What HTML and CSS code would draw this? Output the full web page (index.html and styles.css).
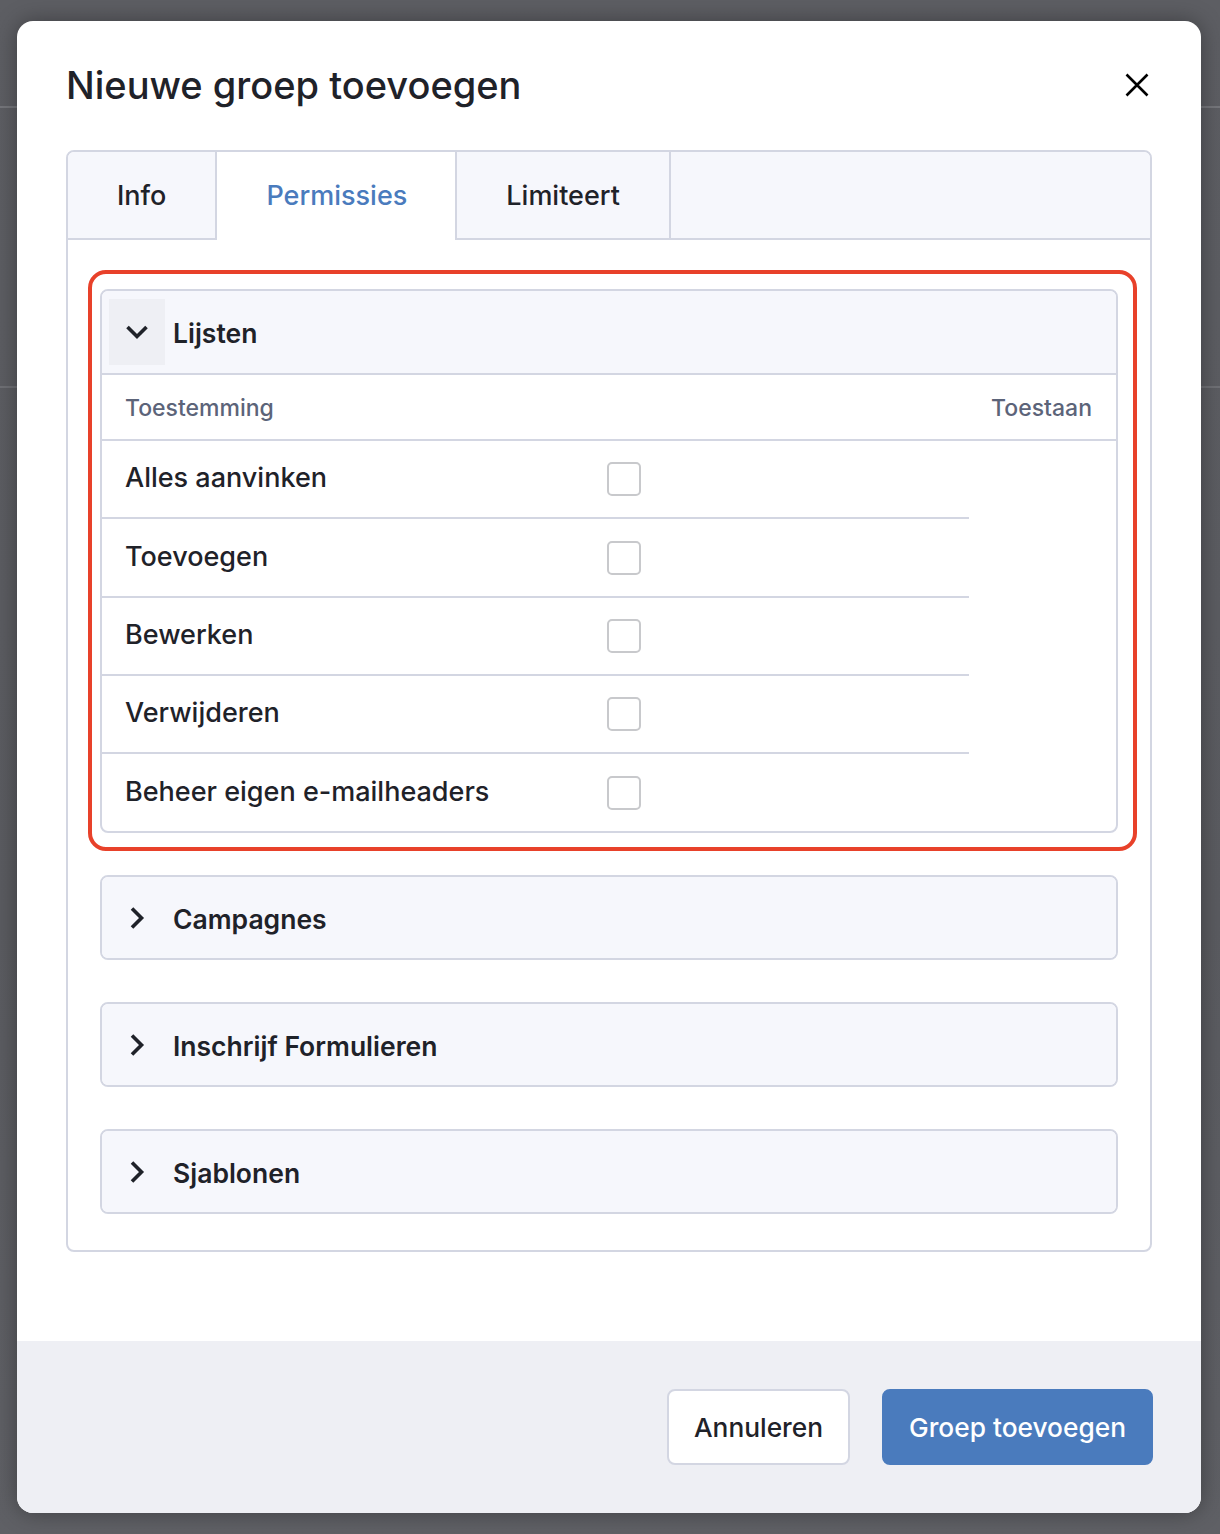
FILE: index.html
```html
<!DOCTYPE html>
<html lang="nl">
<head>
<meta charset="utf-8">
<title>Nieuwe groep toevoegen</title>
<link rel="stylesheet" href="styles.css">
</head>
<body>
<div class="modal">
  <div class="modal-header">
    <h1 class="modal-title">Nieuwe groep toevoegen</h1>
    <button class="close-btn" aria-label="Sluiten">
      <svg width="30" height="30" viewBox="0 0 30 30"><path d="M4.5 4.5 L25.5 25.5 M25.5 4.5 L4.5 25.5" stroke="#000" stroke-width="2.6" fill="none"/></svg>
    </button>
  </div>
  <div class="modal-body">
    <div class="tab-card">
      <div class="tab-bar">
        <div class="tab">Info</div>
        <div class="tab active">Permissies</div>
        <div class="tab">Limiteert</div>
      </div>
      <div class="tab-content">
        <div class="accordion open">
          <div class="highlight"></div>
          <div class="acc-header">
            <span class="acc-toggle">
              <svg width="24" height="24" viewBox="0 0 24 24"><path d="M2.5 7 L12 16.5 L21.5 7" stroke="#1f2229" stroke-width="3.6" fill="none"/></svg>
            </span>
            <span class="acc-title">Lijsten</span>
          </div>
          <div class="perm-table">
            <div class="perm-head">
              <span class="th-name">Toestemming</span>
              <span class="th-allow">Toestaan</span>
            </div>
            <div class="perm-row"><span class="cell-name">Alles aanvinken</span><span class="cell-check"><span class="checkbox"></span></span></div>
            <div class="perm-row tall"><span class="cell-name">Toevoegen</span><span class="cell-check"><span class="checkbox"></span></span></div>
            <div class="perm-row"><span class="cell-name">Bewerken</span><span class="cell-check"><span class="checkbox"></span></span></div>
            <div class="perm-row"><span class="cell-name">Verwijderen</span><span class="cell-check"><span class="checkbox"></span></span></div>
            <div class="perm-row last"><span class="cell-name">Beheer eigen e-mailheaders</span><span class="cell-check"><span class="checkbox"></span></span></div>
          </div>
        </div>
        <div class="accordion">
          <div class="acc-header">
            <span class="acc-toggle plain">
              <svg class="right" width="24" height="24" viewBox="0 0 24 24"><path d="M2.5 7 L12 16.5 L21.5 7" stroke="#1f2229" stroke-width="3.6" fill="none"/></svg>
            </span>
            <span class="acc-title">Campagnes</span>
          </div>
        </div>
        <div class="accordion">
          <div class="acc-header">
            <span class="acc-toggle plain">
              <svg class="right" width="24" height="24" viewBox="0 0 24 24"><path d="M2.5 7 L12 16.5 L21.5 7" stroke="#1f2229" stroke-width="3.6" fill="none"/></svg>
            </span>
            <span class="acc-title">Inschrijf Formulieren</span>
          </div>
        </div>
        <div class="accordion">
          <div class="acc-header">
            <span class="acc-toggle plain">
              <svg class="right" width="24" height="24" viewBox="0 0 24 24"><path d="M2.5 7 L12 16.5 L21.5 7" stroke="#1f2229" stroke-width="3.6" fill="none"/></svg>
            </span>
            <span class="acc-title">Sjablonen</span>
          </div>
        </div>
      </div>
    </div>
  </div>
  <div class="modal-footer">
    <button class="btn btn-secondary">Annuleren</button>
    <button class="btn btn-primary">Groep toevoegen</button>
  </div>
</div>
</body>
</html>
```
FILE: styles.css
```css
* { box-sizing: border-box; }

html, body {
  margin: 0;
  padding: 0;
}

body {
  width: 1220px;
  height: 1534px;
  overflow: hidden;
  font-family: "Inter", "Liberation Sans", sans-serif;
  color: #1f2229;
  background-color: #64656a;
  background-image:
    linear-gradient(to bottom, transparent 106px, #75767b 106px, #75767b 108px, transparent 108px),
    linear-gradient(to bottom, transparent 386px, #6f7075 386px, #6f7075 388px, transparent 388px),
    linear-gradient(to bottom, #5d5e63 0, #5a5b60 60%, #5f6065 100%);
  padding-top: 21px;
  padding-left: 17px;
}

.modal {
  width: 1184px;
  height: 1492px;
  background: #fff;
  border-radius: 16px;
  overflow: hidden;
  display: flex;
  flex-direction: column;
  box-shadow: 0 0 22px rgba(0, 0, 0, 0.35);
}

.modal-header {
  display: flex;
  align-items: center;
  justify-content: space-between;
  padding: 40px 49px 0 49px;
}

.modal-title {
  margin: 0;
  font-size: 38px;
  line-height: 48px;
  font-weight: 500;
  color: #1f2229;
}

.close-btn {
  border: 0;
  background: none;
  padding: 0;
  width: 30px;
  height: 30px;
  display: block;
}
.close-btn svg { display: block; }

.modal-body {
  flex: 1;
  padding: 41px 49px 0 49px;
}

.tab-card {
  border: 2px solid #d3d6e2;
  border-radius: 8px;
  overflow: hidden;
}

.tab-bar {
  display: flex;
  height: 88px;
  background: #f6f7fc;
  border-bottom: 2px solid #d3d6e2;
}

.tab {
  display: flex;
  align-items: center;
  padding: 0 49px 2px 49px;
  border-right: 2px solid #d3d6e2;
  font-size: 27px;
  font-weight: 500;
  color: #1f2229;
  height: 88px;
}

.tab.active {
  background: #fff;
  color: #4a7bbd;
  padding: 0 48px 2px 49px;
}

.tab-content {
  padding: 49px 32px 36px 32px;
  display: flex;
  flex-direction: column;
  gap: 42px;
}

.accordion {
  position: relative;
  border: 2px solid #d3d6e2;
  border-radius: 8px;
  background: #fff;
}

.highlight {
  position: absolute;
  left: -14px;
  top: -21px;
  right: -21px;
  bottom: -20px;
  border: 4px solid #e8412a;
  border-radius: 18px;
  pointer-events: none;
}

.acc-header {
  display: flex;
  align-items: center;
  gap: 8px;
  padding: 8px 7px;
  background: #f6f7fc;
  border-radius: 6px;
}

.accordion.open .acc-header {
  border-bottom: 2px solid #d3d6e2;
  border-radius: 6px 6px 0 0;
}

.acc-toggle {
  width: 56px;
  height: 65px;
  display: flex;
  align-items: center;
  justify-content: center;
  background: #eeeff4;
}

.accordion.open .acc-toggle { height: 66px; }

.acc-toggle.plain { background: transparent; }

.acc-toggle svg { display: block; }
.acc-toggle svg.right { transform: rotate(-90deg); }

.acc-title {
  font-size: 26.5px;
  font-weight: 600;
  color: #1f2229;
  padding-top: 2px;
}

.perm-head {
  display: flex;
  justify-content: space-between;
  align-items: center;
  height: 66px;
  padding: 2px 24px 0 23px;
  border-bottom: 2px solid #d3d6e2;
  font-size: 23px;
  font-weight: 500;
  color: #5c6479;
}

.perm-row {
  display: flex;
  align-items: center;
  width: 867px;
  height: 78px;
  border-bottom: 2px solid #d3d6e2;
}

.perm-row.tall { height: 79px; }

.perm-row.last { border-bottom: 0; height: 77px; }

.cell-name {
  width: 481px;
  padding-left: 23px;
  padding-bottom: 3px;
  font-size: 27px;
  font-weight: 500;
  color: #1f2229;
}

.cell-check {
  padding-left: 24px;
  display: flex;
  align-items: center;
}

.checkbox {
  width: 34px;
  height: 34px;
  border: 2px solid #c8c9cc;
  border-radius: 5px;
  background: #fff;
  display: block;
}

.modal-footer {
  height: 172px;
  background: #eeeff4;
  display: flex;
  align-items: center;
  justify-content: flex-end;
  gap: 32px;
  padding: 0 48px;
}

.btn {
  height: 76px;
  padding: 0 25px;
  border-radius: 8px;
  font-family: "Inter", "Liberation Sans", sans-serif;
  font-size: 26.3px;
  font-weight: 500;
  border: 2px solid transparent;
}

.btn-secondary {
  background: #fff;
  border-color: #d3d6e2;
  color: #1f2229;
}

.btn-primary {
  background: #4a7bbd;
  border-color: #4a7bbd;
  color: #fff;
}
```
